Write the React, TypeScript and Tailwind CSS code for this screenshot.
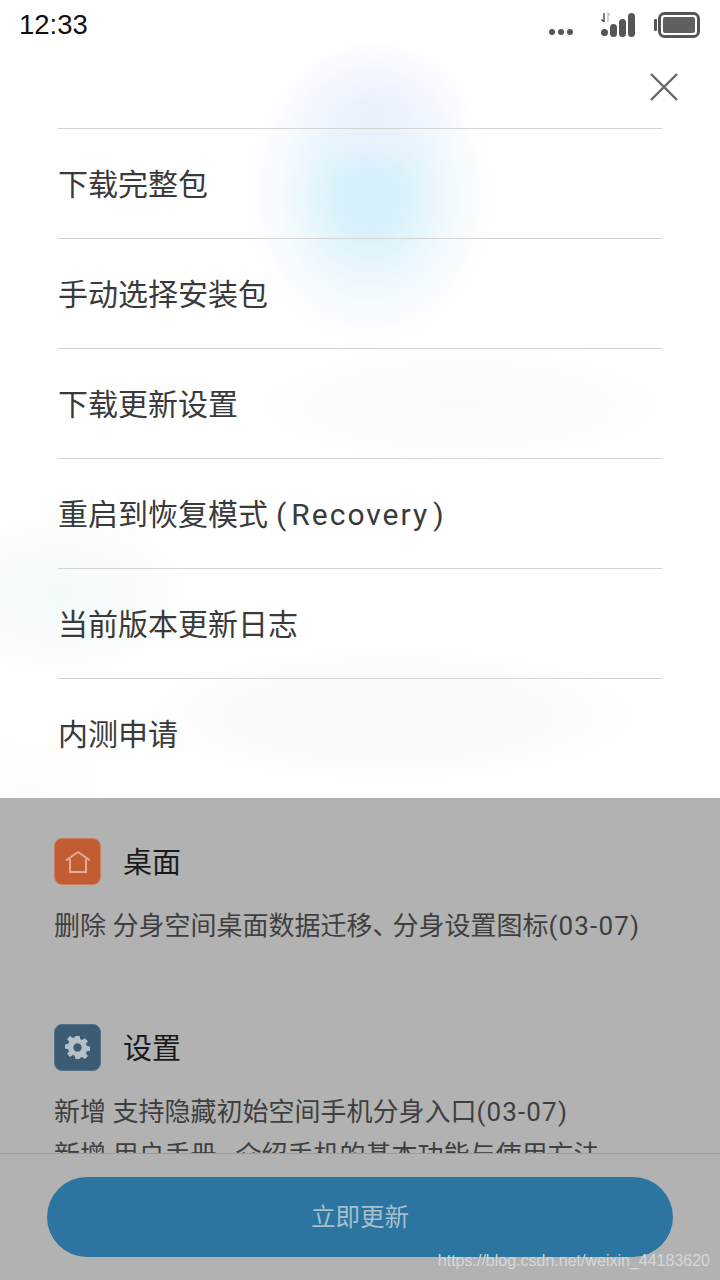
import React from "react";

const rows: React.ReactNode[] = [
  "下载完整包",
  "手动选择安装包",
  "下载更新设置",
  <>
    重启到恢复模式
    <span className="ml-[8px] mr-[5px]">(</span>
    <span className="tracking-[2px]">Recovery</span>
    <span className="ml-[4px]">)</span>
  </>,
  "当前版本更新日志",
  "内测申请",
];

function Dates({ children }: { children: string }) {
  return <span className="tracking-[1.15px]">{children}</span>;
}

function StatusIcons() {
  return (
    <div className="flex items-end">
      <svg width="26" height="12" viewBox="0 0 26 12" className="mb-[1px] mr-[26px]">
        <circle cx="4" cy="7" r="3" fill="#555" />
        <circle cx="13" cy="7" r="3" fill="#555" />
        <circle cx="22" cy="7" r="3" fill="#555" />
      </svg>
      <svg width="36" height="26" viewBox="0 0 36 26" className="mr-[18px]">
        <path d="M4 1v9M1.5 7.5 4 10" stroke="#555" strokeWidth="1.5" fill="none" />
        <path d="M8 10V1l2 2.5" stroke="#bbb" strokeWidth="1.2" fill="none" />
        <rect x="1" y="17" width="7" height="7" rx="3.5" fill="#555" />
        <rect x="10" y="12" width="7" height="13" rx="3.5" fill="#555" />
        <rect x="19" y="7" width="7" height="18" rx="3.5" fill="#555" />
        <rect x="28" y="1" width="7" height="24" rx="3.5" fill="#555" />
      </svg>
      <svg width="46" height="26" viewBox="0 0 46 26">
        <rect x="0" y="7" width="3" height="12" rx="1" fill="#555" />
        <rect x="5.5" y="1.5" width="39" height="23" rx="5" fill="none" stroke="#555" strokeWidth="3" />
        <rect x="9" y="5" width="32" height="16" rx="2" fill="#5f5f5f" />
      </svg>
    </div>
  );
}

function Section({ title, color, icon, lines }: { title: string; color: string; icon: React.ReactNode; lines: React.ReactNode[] }) {
  return (
    <div className="flex flex-col">
      <div className="flex items-center gap-[22px] h-[48px]">
        <div className={`w-[47px] h-[47px] rounded-[8px] border flex items-center justify-center ${color}`}>{icon}</div>
        <div className="text-[29px] leading-[48px] text-[#1a1a1a] pt-[3px]">{title}</div>
      </div>
      <div className="mt-[20px] flex flex-col text-[26px] leading-[43px] text-[#3f3f3f]">
        {lines.map((l, i) => (
          <div key={i} className="whitespace-nowrap">{l}</div>
        ))}
      </div>
    </div>
  );
}

export default function App() {
  return (
    <div className="w-[720px] h-[1280px] flex flex-col overflow-hidden bg-[#b2b2b2] font-['Roboto','Noto_Sans_CJK_SC',sans-serif]">
      <div className="relative h-[798px] shrink-0 overflow-hidden bg-white">
        <div className="absolute left-[232px] top-[30px] w-[276px] h-[330px] bg-[radial-gradient(closest-side,#d3effb_0%,#d8f1fb_22%,#e6f6fc_42%,#f3fafe_62%,#fbfdff_82%,#ffffff_100%)]" />
        <div className="absolute left-[280px] top-[40px] w-[190px] h-[140px] bg-[radial-gradient(closest-side,#e8ecfcbb_0%,#eef1fd88_45%,#ffffff00_100%)]" />
        <div className="absolute left-[-90px] top-[500px] w-[300px] h-[190px] bg-[radial-gradient(closest-side,#f3fafa_0%,#f9fcfc_50%,#ffffff00_100%)]" />
        <div className="absolute left-[230px] top-[340px] w-[460px] h-[130px] bg-[radial-gradient(closest-side,#fbfbfb_0%,#fcfcfc_60%,#ffffff00_100%)]" />
        <div className="absolute left-[120px] top-[640px] w-[540px] h-[150px] bg-[radial-gradient(closest-side,#f9f9f9_0%,#fbfbfb_60%,#ffffff00_100%)]" />
        <div className="absolute left-[-60px] top-[720px] w-[180px] h-[140px] bg-[radial-gradient(closest-side,#fffbf9_0%,#ffffff00_100%)]" />

        <div className="relative">
          <div className="h-[50px] pl-[19px] pr-[20px] flex items-center justify-between">
            <span className="font-['Liberation_Sans',sans-serif] text-[27.5px] leading-[50px] text-[#111]">12:33</span>
            <StatusIcons />
          </div>
          <div className="h-[78px] pr-[42px] flex justify-end pt-[23px]">
            <svg width="28" height="28" viewBox="0 0 28 28">
              <path d="M1 1 27 27M27 1 1 27" stroke="#666" strokeWidth="2.4" fill="none" />
            </svg>
          </div>
          <div className="mx-[58px] flex flex-col">
            {rows.map((r, i) => (
              <div key={i} className="h-[110px] border-t border-[#d4d4d4] pt-[2px] flex items-center text-[30px] text-[#3a3a3a] whitespace-nowrap">
                <span>{r}</span>
              </div>
            ))}
          </div>
        </div>
      </div>

      <div className="flex-1 min-h-0 overflow-hidden pl-[54px] pt-[39px] flex flex-col gap-[75px]">
        <Section
          title="桌面"
          color="bg-[#c25c32] border-[#cc805f]"
          icon={
            <svg width="26" height="23" viewBox="0 0 26 23" fill="none" stroke="#e2ab93" strokeWidth="2">
              <path d="M1 10.5 13 2l12 8.5" strokeLinejoin="round" />
              <path d="M5 9v13h16V9" />
            </svg>
          }
          lines={[
            <>
              删除 分身空间桌面数据迁移<span className="tracking-[-6px]">、</span>分身设置图标<Dates>(03-07)</Dates>
            </>,
          ]}
        />
        <Section
          title="设置"
          color="bg-[#3c5c76] border-[#557188]"
          icon={
            <svg width="25" height="25" viewBox="0 0 24 24">
              <path
                fill="#b6c0c8"
                fillRule="evenodd"
                d="M10 1h4l.6 3.1 1.9.8L19.1 3l2.9 2.9-1.9 2.6.8 1.9 3.1.6v4l-3.1.6-.8 1.9 1.9 2.6-2.9 2.9-2.6-1.9-1.9.8L14 23h-4l-.6-3.1-1.9-.8L4.9 21 2 18.1l1.9-2.6-.8-1.9L0 13V9l3.1-.6.8-1.9L2 3.9 4.9 1l2.6 1.9 1.9-.8zM12 8a4 4 0 1 0 0 8 4 4 0 0 0 0-8z"
              />
            </svg>
          }
          lines={[
            <>
              新增 支持隐藏初始空间手机分身入口<Dates>(03-07)</Dates>
            </>,
            <>
              新增 用户手册<span className="tracking-[-7px]">，</span>介绍手机的基本功能与使用方法
            </>,
          ]}
        />
      </div>

      <div className="relative h-[127px] shrink-0 border-t border-[#9c9c9c] bg-[#b2b2b2] flex justify-center pt-[23px]">
        <div className="w-[626px] h-[80px] rounded-full bg-[#2b75a0] pt-[2px] flex items-center justify-center text-[24.5px] text-[#a6bfcc]">
          立即更新
        </div>
        <span className="absolute right-[10px] top-[95px] font-['Liberation_Sans',sans-serif] text-[16px] leading-[24px] text-[#d4d8da]">
          https://blog.csdn.net/weixin_44183620
        </span>
      </div>
    </div>
  );
}
